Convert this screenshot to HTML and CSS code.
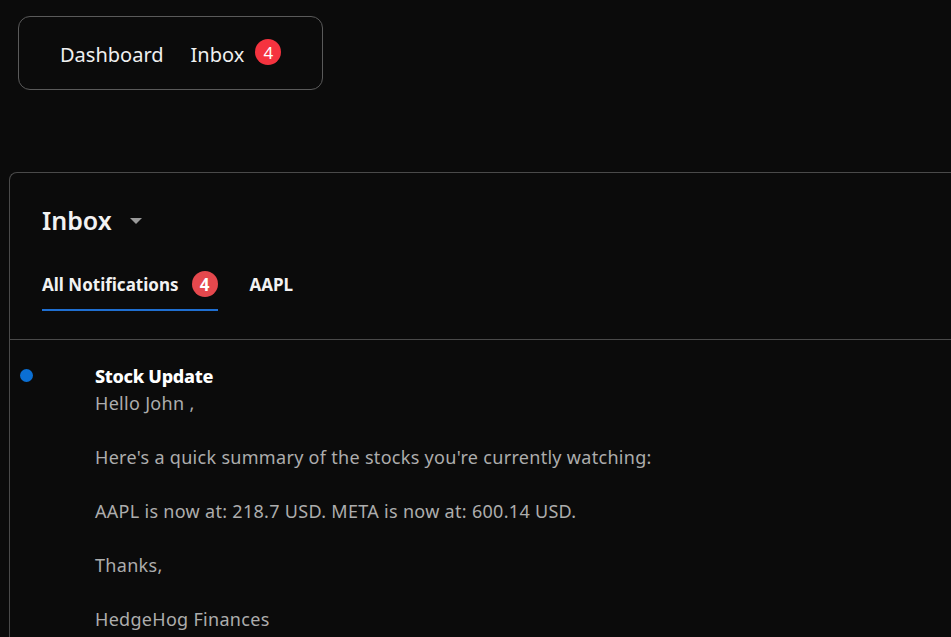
FILE: index.html
```html
<!DOCTYPE html>
<html>
<head>
<meta charset="utf-8">
<link rel="stylesheet" href="styles.css">
</head>
<body>
<nav class="topnav">
  <a class="navlink">Dashboard</a>
  <a class="navlink">Inbox <span class="badge badge-nav">4</span></a>
</nav>
<section class="card">
  <header class="card-head">
    <h1 class="title">Inbox <span class="caret"></span></h1>
    <div class="tabs">
      <div class="tab active">All Notifications <span class="badge badge-tab">4</span></div>
      <div class="tab">AAPL</div>
    </div>
  </header>
  <div class="message">
    <span class="dot"></span>
    <div class="msg-body">
      <div class="msg-title">Stock Update</div>
      <p>Hello John ,</p>
      <p>Here's a quick summary of the stocks you're currently watching:</p>
      <p>AAPL is now at: 218.7 USD. META is now at: 600.14 USD.</p>
      <p>Thanks,</p>
      <p>HedgeHog Finances</p>
    </div>
  </div>
</section>
</body>
</html>
```
FILE: styles.css
```css
html, body {
  margin: 0;
  background: #0b0b0b;
  font-family: "Noto Sans", "Open Sans", sans-serif;
  color: #f2f2f2;
}
body {
  padding: 16px 0 0 9px;
  height: 621px;
  overflow: hidden;
}
.topnav {
  margin-left: 9px;
  width: 305px;
  height: 74px;
  box-sizing: border-box;
  border: 1px solid #5a5a5a;
  border-radius: 12px;
  display: flex;
  align-items: center;
  padding-left: 41px;
  gap: 27px;
}
.navlink {
  font-size: 20px;
  color: #f0f0f0;
  display: flex;
  align-items: center;
  position: relative;
  top: 1px;
}
.badge {
  display: inline-flex;
  align-items: center;
  justify-content: center;
  width: 26px;
  height: 26px;
  border-radius: 50%;
  color: #fff;
  font-size: 17px;
  letter-spacing: 0;
}
.badge-nav {
  background: #f5333f;
  margin-left: 11px;
  position: relative;
  top: -2px;
  font-weight: 400;
}
.card {
  margin-top: 82px;
  border: 1px solid #4a4a4a;
  border-right: none;
  border-bottom: none;
  border-radius: 8px 0 0 0;
  height: 470px;
}
.card-head {
  padding: 28px 0 0 32px;
  border-bottom: 1px solid #4a4a4a;
}
.title {
  margin: 0;
  font-size: 25px;
  font-weight: 600;
  display: flex;
  align-items: center;
  height: 38px;
}
.caret {
  width: 0;
  height: 0;
  border-left: 6px solid transparent;
  border-right: 6px solid transparent;
  border-top: 6px solid #9a9a9a;
  margin-left: 18px;
  margin-top: 2px;
}
.tabs {
  display: flex;
  gap: 32px;
  margin-top: 20px;
}
.tab {
  font-size: 17px;
  font-weight: 700;
  height: 52px;
  box-sizing: border-box;
  display: flex;
  align-items: center;
  padding-bottom: 2px;
}
.tab.active {
  border-bottom: 2px solid #1f6fd1;
  padding-bottom: 0;
  margin-bottom: 28px;
}
.badge-tab {
  background: #e5484d;
  margin-left: 13px;
  font-weight: 700;
}
.message {
  display: flex;
  padding: 23px 0 0 10px;
}
.dot {
  width: 13px;
  height: 13px;
  border-radius: 50%;
  background: #0b6fd3;
  margin-top: 6px;
  flex: none;
}
.msg-body {
  margin-left: 62px;
  color: #adadad;
  font-size: 18px;
  line-height: 27px;
  letter-spacing: 0.3px;
}
.msg-title {
  color: #fff;
  font-weight: 800;
  letter-spacing: -0.3px;
}
.msg-body p {
  margin: 0 0 27px;
}
```
